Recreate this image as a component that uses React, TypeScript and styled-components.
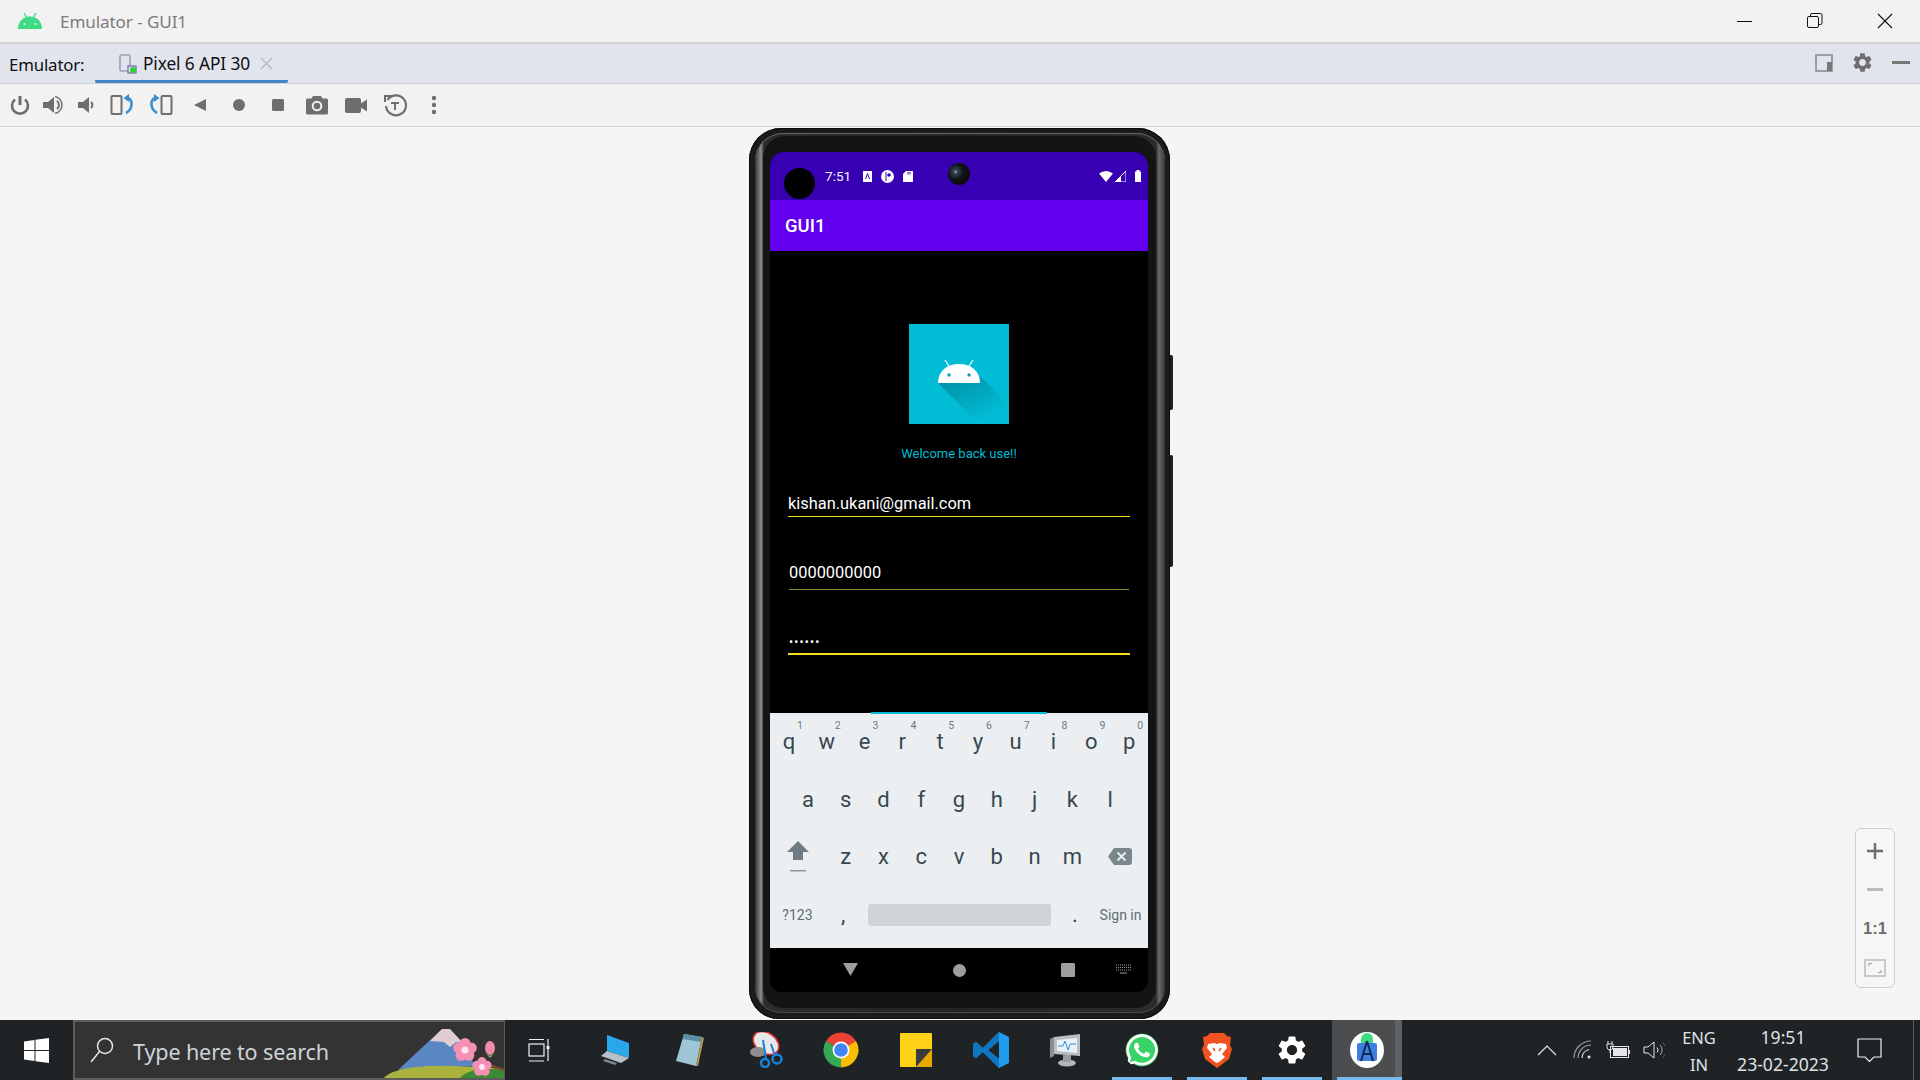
import React from "react";
import styled, { createGlobalStyle } from "styled-components";
import { MdSettings } from "react-icons/md";
import { FaWhatsapp } from "react-icons/fa";

const Global = createGlobalStyle`
  html, body { margin: 0; padding: 0; background: #f5f5f5; overflow: hidden; }
  * { box-sizing: border-box; }
`;

const ui = `"Noto Sans", "Open Sans", sans-serif`;
const droid = `Roboto, "Noto Sans", sans-serif`;

const Root = styled.div`
  width: 1920px; height: 1080px; display: flex; flex-direction: column;
  font-family: ${ui}; overflow: hidden;
`;

/* window chrome */
const TitleBar = styled.header`
  height: 44px; flex: none; display: flex; align-items: center;
  background: #f2f2f2; border-bottom: 2px solid #d1d1d1; padding-left: 18px;
`;
const TitleText = styled.span`
  margin-left: 18px; font-size: 17.1px; color: #7c7c7c; letter-spacing: -0.1px;
`;
const WindowControls = styled.div`
  margin-left: auto; display: flex; height: 100%;
`;
const WindowButton = styled.div`
  width: 70px; display: flex; align-items: center; justify-content: center;
`;

const TabBar = styled.div`
  height: 40px; flex: none; display: flex; align-items: stretch;
  background: #e1e4ec; border-bottom: 1px solid #d1d1d1;
`;
const TabLabel = styled.span`
  margin-left: 9px; width: 86px; font-size: 16.8px; line-height: 41px; color: #101010;
  letter-spacing: -0.15px;
`;
const Tab = styled.div`
  width: 193px; display: flex; align-items: center; padding: 3px 0 0 24px;
  border-bottom: 3px solid #4083c9; border-radius: 0 0 2px 2px;
  font-size: 17.3px; color: #101010; letter-spacing: -0.1px;
`;
const TabText = styled.span`
  margin-left: 6px; white-space: nowrap;
`;
const TabClose = styled.span`
  margin-left: 10px; display: flex;
`;
const TabTools = styled.div`
  margin-left: auto; display: flex; align-items: center; padding: 0 0 2px 0;
`;
const TabTool = styled.div`
  width: 38.5px; display: flex; justify-content: center; align-items: center; color: #6e6e6e;
`;

const Toolbar = styled.div`
  height: 43px; flex: none; display: flex; align-items: center; padding-left: 4px;
  background: #f2f2f2; border-bottom: 1px solid #d1d1d1; color: #6e6e6e;
`;
const ToolSlot = styled.div<{ $w: number }>`
  width: ${p => p.$w}px; flex: none; display: flex; align-items: center; justify-content: center;
`;

/* device area */
const Main = styled.main`
  flex: 1; position: relative; display: flex; justify-content: center; align-items: flex-start;
  background: #f5f5f5; padding-top: 1px;
`;
const PhoneFrame = styled.div`
  position: relative; width: 421px; height: 891px; margin-right: 1px; padding: 5px 5px 6px 6px;
  background: #1b1b1b; border-radius: 32px 32px 30px 30px;
  box-shadow: inset 0 0 0 1px #0c0c0c;
`;
const PhoneRim = styled.div`
  height: 100%; padding: 3px 9px 5px 8px; border-radius: 28px 28px 26px 26px;
  background: linear-gradient(90deg, #333 0, #8c8c8c 6px, #2c2c2c 9px, #242424 50%, #2c2c2c calc(100% - 9px), #6a6a6a calc(100% - 6px), #333 100%);
  box-shadow: inset 0 1px 0 #666, inset 0 -1px 0 #4a4a4a;
`;
const PhoneBezel = styled.div`
  height: 100%; padding: 16px 5px 15px 7px; background: #141414; border-radius: 22px 22px 20px 20px;
`;
const Screen = styled.div`
  position: relative; width: 378px; height: 840px; background: #000; border-radius: 14px 14px 12px 12px;
  overflow: hidden; display: flex; flex-direction: column; font-family: ${droid};
`;
const SideButton = styled.div<{ $top: number; $h: number }>`
  position: absolute; right: -3px; top: ${p => p.$top}px; width: 3px; height: ${p => p.$h}px;
  background: #1e1e1e; border-radius: 0 2px 2px 0;
`;

const StatusBar = styled.div`
  height: 48px; flex: none; background: #3700b3; display: flex; align-items: flex-start;
  padding: 16px 6px 0 14px; color: #fff;
`;
const PunchHole = styled.div`
  width: 31px; height: 31px; border-radius: 50%; background: #000; flex: none;
`;
const StatusGroup = styled.div<{ $right?: boolean }>`
  display: flex; align-items: center; height: 14px; margin-top: 1px;
  margin-left: ${p => (p.$right ? "auto" : "10px")}; gap: ${p => (p.$right ? "2px" : "0")};
`;
const StatusTime = styled.span`
  font-size: 13.6px; width: 38px; color: #f4f0fb;
`;
const StatusIcon = styled.span<{ $w: number }>`
  width: ${p => p.$w}px; display: flex; justify-content: flex-start;
`;
const Camera = styled.div`
  position: absolute; left: 178px; top: 11px; width: 22px; height: 22px; border-radius: 50%;
  background: radial-gradient(circle at 35% 40%, #8fa0ad 0, #33404a 12%, #101419 38%, #0a0a0a 70%, #2a2a2a 100%);
`;
const AppBar = styled.div`
  height: 51px; flex: none; background: #6200ee; color: #fff; display: flex; align-items: center;
  padding-left: 15px; font-size: 18.5px; font-weight: 500;
`;
const Body = styled.div`
  flex: 1; display: flex; flex-direction: column; align-items: flex-start; padding-top: 73px; background: #000;
`;
const Logo = styled.div`
  width: 100px; height: 100px; align-self: center; background: #00bcd4; display: flex;
`;
const Welcome = styled.div`
  align-self: center; margin-top: 23px; font-size: 13px; line-height: 14px; color: #00bcd4;
`;
const Field = styled.div<{ $left: number; $w: number; $top: number; $pad: number; $line: string; $th: number }>`
  margin: ${p => p.$top}px 0 0 ${p => p.$left}px; width: ${p => p.$w}px; padding-bottom: ${p => p.$pad}px;
  border-bottom: ${p => p.$th}px solid ${p => p.$line}; color: #fff; font-size: 16.4px; line-height: 20px;
`;
const Dots = styled.span`
  font-size: 12px; letter-spacing: 1.2px; margin-left: 1px;
`;

const Keyboard = styled.div`
  position: relative; height: 235px; flex: none; background: #eceff1; padding-top: 1px; color: #37474f;
`;
const KeyboardAccent = styled.div`
  position: absolute; left: 101px; top: -1px; width: 176px; height: 2px; background: #00bcd4;
`;
const KeyRow = styled.div<{ $inset?: number }>`
  height: 57.5px; display: flex; align-items: center; padding: 0 ${p => p.$inset ?? 0}px;
`;
const Key = styled.div<{ $span?: number }>`
  position: relative; flex: ${p => p.$span ?? 1} 1 0; height: 100%; display: flex;
  align-items: center; justify-content: center; font-size: 22px; padding-bottom: 2px;
`;
const KeyHint = styled.span`
  position: absolute; top: 5px; left: 27px; font-size: 10.5px; color: #6c7a81; line-height: 13px;
`;
const ActionKey = styled(Key)`
  font-size: 14px; color: #5f6e75; padding-bottom: 0;
`;
const SpaceBar = styled.div`
  flex: 5 1 0; height: 22px; margin: 0 6px; border-radius: 3px; background: #cfd4d7;
`;
const NavBar = styled.div`
  height: 44px; flex: none; background: #000; display: flex; align-items: center; padding: 0 0 2px 60px;
`;
const NavSlot = styled.div<{ $after: number }>`
  width: 40px; display: flex; justify-content: center; margin-right: ${p => p.$after}px;
`;
const NavCircle = styled.div`
  width: 13px; height: 13px; border-radius: 50%; background: #9e9e9e; margin-top: 2px;
`;
const NavSquare = styled.div`
  width: 14px; height: 14px; border-radius: 1px; background: #9e9e9e; margin-top: 1px;
`;

const ZoomPanel = styled.div`
  position: absolute; right: 25px; bottom: 32px; width: 40px; height: 160px; border: 1.5px solid #cfcfcf;
  border-radius: 6px; background: #f6f6f6; display: flex; flex-direction: column; padding-top: 3px;
`;
const ZoomItem = styled.div`
  height: 39px; display: flex; align-items: center; justify-content: center; color: #6e6e6e;
  font: 700 16.5px "Liberation Sans", sans-serif;
`;

/* taskbar */
const Taskbar = styled.footer`
  height: 60px; flex: none; display: flex; align-items: stretch; background: #1f2326; color: #e4e6e8;
`;
const StartButton = styled.div`
  width: 73px; display: flex; align-items: center; justify-content: center;
`;
const SearchBox = styled.div`
  position: relative; width: 432px; background: #333; border: 2px solid #5c5c5c; border-right-width: 1px;
  display: flex; align-items: center; padding-left: 14px; overflow: hidden;
`;
const SearchText = styled.span`
  margin-left: 18px; font-size: 21.6px; color: #cdd3d8; letter-spacing: -0.15px; padding-top: 3px;
`;
const SearchArt = styled.div`
  position: absolute; right: 0; bottom: 0; width: 120px; height: 52px; display: flex;
`;
const Rail = styled.div`
  display: flex; gap: 5.2px;
`;
const Slot = styled.div<{ $open?: boolean; $active?: boolean }>`
  position: relative; width: 70px; display: flex; align-items: center; justify-content: center;
  background: ${p => (p.$active ? "linear-gradient(90deg,#4b4d4f 0,#4b4d4f 90%,#5f6163 90%)" : "transparent")};
  &::after {
    content: "";
    display: ${p => (p.$open ? "block" : "none")};
    position: absolute; bottom: 0; height: 3px; background: #76b9ed;
    left: 5px; right: ${p => (p.$active ? "0" : "5px")};
  }
`;
const Tray = styled.div`
  margin-left: auto; display: flex; align-items: stretch; padding-right: 6px;
`;
const TraySlot = styled.div<{ $w: number }>`
  width: ${p => p.$w}px; display: flex; align-items: center; justify-content: center;
`;
const TrayText = styled.div<{ $w: number; $size: number }>`
  width: ${p => p.$w}px; display: flex; flex-direction: column; align-items: center; justify-content: center;
  font-size: ${p => p.$size}px; line-height: 27px; color: #dfe1e3; padding-top: 1px; white-space: nowrap;
`;
const DesktopEdge = styled.div`
  width: 15px; border-right: 1px solid #5a5a5a;
`;
const WhatsappMark = styled(FaWhatsapp)`
  width: 36px; height: 36px; color: #fff; border-radius: 50%;
  background: radial-gradient(circle, #37d366 0 62%, transparent 66%);
`;

/* drawings */
const AndroidHead = () => (
  <svg width="24" height="18" viewBox="0 0 24 18">
    <path d="M6 1l3 5M18 1l-3 5" stroke="#3ddc84" strokeWidth="1.4" />
    <path d="M0 17C0 9.500 5 4.500 12 4.500S24 9.500 24 17Z" fill="#3ddc84" />
    <circle cx="6.500" cy="12" r="1" fill="#f2f2f2" /><circle cx="17.500" cy="12" r="1" fill="#f2f2f2" />
  </svg>
);
const Tool = ({ children, w = 24 }: { children: React.ReactNode; w?: number }) => (
  <svg width={w} height="24" viewBox={`0 0 ${w} 24`} fill="none">{children}</svg>
);
const grey = "#6e6e6e";
const blue = "#3a8ed0";

const LogoArt = () => (
  <svg width="100" height="100" viewBox="0 0 100 100">
    <defs>
      <linearGradient id="sh" x1="0.1" y1="0" x2="0.75" y2="0.8">
        <stop offset="0" stopColor="#008ea2" /><stop offset="1" stopColor="#00bcd4" />
      </linearGradient>
    </defs>
    <polygon points="29,59 71,59 71,52 100,81 100,100 70,100" fill="url(#sh)" />
    <path d="M36 36l4 6M64 36l-4 6" stroke="#fff" strokeWidth="1.2" />
    <path d="M29 59C29 47 38 40 50 40S71 47 71 59Z" fill="#fff" />
    <circle cx="40" cy="51" r="1.700" fill="#00a4b8" /><circle cx="60" cy="51" r="1.700" fill="#00a4b8" />
  </svg>
);

const Chrome = () => (
  <svg width="36" height="36" viewBox="0 0 36 36">
    <path d="M18 18L3 9A17.500 17.500 0 0 1 33 9Z" fill="#ea4335" />
    <path d="M18 18L33 9A17.500 17.500 0 0 1 18 35.500Z" fill="#fbbc04" />
    <path d="M18 18L18 35.500A17.500 17.500 0 0 1 3 9Z" fill="#34a853" />
    <circle cx="18" cy="18" r="8.500" fill="#fff" /><circle cx="18" cy="18" r="6.800" fill="#4285f4" />
  </svg>
);

const Blossom = ({ x, y, r }: { x: number; y: number; r: number }) => (
  <g>
    {[0, 72, 144, 216, 288].map(a => (
      <circle
        key={a}
        cx={x + Math.cos((a * Math.PI) / 180 - Math.PI / 2) * r * 0.6}
        cy={y + Math.sin((a * Math.PI) / 180 - Math.PI / 2) * r * 0.6}
        r={r * 0.5}
        fill="#f58fb4"
      />
    ))}
    <circle cx={x} cy={y} r={r * 0.32} fill="#fde6ef" />
  </g>
);

export default function App() {
  const top = "qwertyuiop".split("");
  const mid = "asdfghjkl".split("");
  const low = "zxcvbnm".split("");
  return (
    <Root>
      <Global />
      <TitleBar>
        <AndroidHead />
        <TitleText>Emulator - GUI1</TitleText>
        <WindowControls>
          <WindowButton><svg width="16" height="16"><path d="M0 8.500h15" stroke="#111" /></svg></WindowButton>
          <WindowButton><svg width="16" height="16" fill="none" stroke="#111"><rect x="0.500" y="3.500" width="11" height="11" rx="1.500" /><path d="M3.500 3.500V2a1.500 1.500 0 0 1 1.500-1.500h8.500A1.500 1.500 0 0 1 15 2v8a1.500 1.500 0 0 1-1.500 1.500h-2" /></svg></WindowButton>
          <WindowButton><svg width="16" height="16"><path d="M1 1l14 14M15 1L1 15" stroke="#111" strokeWidth="1.100" /></svg></WindowButton>
        </WindowControls>
      </TitleBar>

      <TabBar>
        <TabLabel>Emulator:</TabLabel>
        <Tab>
          <svg width="18" height="20" viewBox="0 0 18 20" fill="none">
            <rect x="1" y="1" width="10" height="16" rx="1.500" stroke="#9aa4ae" strokeWidth="1.600" />
            <rect x="9" y="12" width="8" height="7" fill="#e1e4ec" stroke="#7a5fb5" strokeWidth="1.200" />
            <circle cx="14" cy="16" r="3" fill="#27d827" />
          </svg>
          <TabText>Pixel 6 API 30</TabText>
          <TabClose><svg width="13" height="13"><path d="M1 1l11 11M12 1L1 12" stroke="#b4b8c0" strokeWidth="1.300" /></svg></TabClose>
        </Tab>
        <TabTools>
          <TabTool>
            <svg width="18" height="18" viewBox="0 0 18 18"><rect x="1" y="1" width="16" height="16" fill="none" stroke="#777" strokeWidth="1.300" /><rect x="12" y="8" width="5" height="9" fill="#777" /></svg>
          </TabTool>
          <TabTool><MdSettings size={23} /></TabTool>
          <TabTool><svg width="18" height="4"><rect width="18" height="3" fill="#777" /></svg></TabTool>
        </TabTools>
      </TabBar>

      <Toolbar>
        <ToolSlot $w={32}><Tool><path d="M12 3v9" stroke={grey} strokeWidth="3" /><path d="M7 6.500a8 8 0 1 0 10 0" stroke={grey} strokeWidth="2.600" /></Tool></ToolSlot>
        <ToolSlot $w={34}><Tool><path d="M2 9h5l6-5v16l-6-5H2Z" fill={grey} /><path d="M16 8a5 5 0 0 1 0 8" stroke={grey} strokeWidth="2" /><path d="M14 3.500a9 9 0 0 1 7 8.500a9 9 0 0 1-7 8.500" stroke={grey} strokeWidth="1.500" /></Tool></ToolSlot>
        <ToolSlot $w={32}><Tool><path d="M4 9h5l6-5v16l-6-5H4Z" fill={grey} /><path d="M17 9a4 4 0 0 1 0 6" stroke={grey} strokeWidth="2" /></Tool></ToolSlot>
        <ToolSlot $w={40}><Tool w={24}><rect x="1.500" y="3" width="10" height="18" rx="1" stroke={grey} strokeWidth="2" /><path d="M18 5C23 7 23 16 16 20" stroke={blue} strokeWidth="2.600" /><path d="M13.500 5L19 1v8Z" fill={blue} /></Tool></ToolSlot>
        <ToolSlot $w={38}><Tool w={24}><rect x="12.500" y="3" width="10" height="18" rx="1" stroke={grey} strokeWidth="2" /><path d="M6 5C1 7 1 16 8 20" stroke={blue} strokeWidth="2.600" /><path d="M10.500 5L5 1v8Z" fill={blue} /></Tool></ToolSlot>
        <ToolSlot $w={39}><Tool><path d="M6 12l12-6v12Z" fill={grey} /></Tool></ToolSlot>
        <ToolSlot $w={39}><Tool><circle cx="12" cy="12" r="6" fill={grey} /></Tool></ToolSlot>
        <ToolSlot $w={39}><Tool><rect x="6" y="6" width="12" height="12" rx="1.500" fill={grey} /></Tool></ToolSlot>
        <ToolSlot $w={39}><Tool><path d="M1 7a1.500 1.500 0 0 1 1.500-1.500h4L8 3h8l1.500 2.500h4A1.500 1.500 0 0 1 23 7v13a1.500 1.500 0 0 1-1.500 1.500h-19A1.500 1.500 0 0 1 1 20Z" fill={grey} /><circle cx="12" cy="13" r="4.300" fill="none" stroke="#f2f2f2" strokeWidth="2" /></Tool></ToolSlot>
        <ToolSlot $w={39}><Tool><rect x="1" y="5" width="16" height="15" rx="2" fill={grey} /><path d="M16 11l7-4.500v12L16 14Z" fill={grey} /></Tool></ToolSlot>
        <ToolSlot $w={39}><Tool><path d="M4.500 7A10 10 0 1 1 3 13" stroke={grey} strokeWidth="2.200" /><path d="M1 2h7v2H3v5H1Z" fill={grey} /><path d="M8 10h8M12 10v7" stroke={grey} strokeWidth="2" /></Tool></ToolSlot>
        <ToolSlot $w={39}><Tool><circle cx="12" cy="5" r="2.200" fill={grey} /><circle cx="12" cy="12" r="2.200" fill={grey} /><circle cx="12" cy="19" r="2.200" fill={grey} /></Tool></ToolSlot>
      </Toolbar>

      <Main>
        <PhoneFrame>
          <SideButton $top={227} $h={55} />
          <SideButton $top={327} $h={112} />
          <PhoneRim>
            <PhoneBezel>
              <Screen>
                <StatusBar>
                  <PunchHole />
                  <StatusGroup>
                    <StatusTime>7:51</StatusTime>
                    <StatusIcon $w={18}>
                      <svg width="9" height="11" viewBox="0 0 9 11"><path d="M0 0h9v11H0Z" fill="#fff" /><path d="M2.500 8L4.500 2.500 6.500 8" stroke="#3700b3" fill="none" /></svg>
                    </StatusIcon>
                    <StatusIcon $w={22}>
                      <svg width="13" height="13" viewBox="0 0 13 13"><circle cx="6.500" cy="6.500" r="6.500" fill="#fff" /><path d="M5 2v9" stroke="#3700b3" /><circle cx="8" cy="5" r="1.800" fill="#3700b3" /></svg>
                    </StatusIcon>
                    <StatusIcon $w={10}>
                      <svg width="10" height="11" viewBox="0 0 10 11"><path d="M3 0h7v11H0V3Z" fill="#fff" /><path d="M5 1v2.500M7 1v2.500" stroke="#3700b3" /></svg>
                    </StatusIcon>
                  </StatusGroup>
                  <Camera />
                  <StatusGroup $right>
                    <svg width="14" height="11" viewBox="0 0 14 11"><path d="M0 2.500Q7-2.500 14 2.500L7 11Z" fill="#fff" /></svg>
                    <svg width="11" height="11" viewBox="0 0 11 11"><path d="M11 0V11H0Z" fill="none" stroke="#fff" /><path d="M6 5.500V11H0Z M6 5V11H1L6 5" fill="#fff" /></svg>
                    <svg width="14" height="12" viewBox="0 0 14 12"><path d="M8.500 1.500V0h3v1.500H13V12H7V1.500Z" fill="#fff" /></svg>
                  </StatusGroup>
                </StatusBar>
                <AppBar>GUI1</AppBar>
                <Body>
                  <Logo><LogoArt /></Logo>
                  <Welcome>Welcome back use!!</Welcome>
                  <Field $left={18} $w={342} $top={33} $pad={2} $line="#f0dc14" $th={1}>kishan.ukani@gmail.com</Field>
                  <Field $left={19} $w={340} $top={46} $pad={6} $line="#8f8526" $th={1}>0000000000</Field>
                  <Field $left={18} $w={342} $top={41} $pad={1} $line="#f4dc1e" $th={2}><Dots>••••••</Dots></Field>
                </Body>
                <Keyboard>
                  <KeyboardAccent />
                  <KeyRow>
                    {top.map((k, i) => (
                      <Key key={k}>{k}<KeyHint>{(i + 1) % 10}</KeyHint></Key>
                    ))}
                  </KeyRow>
                  <KeyRow $inset={19}>
                    {mid.map(k => <Key key={k}>{k}</Key>)}
                  </KeyRow>
                  <KeyRow>
                    <Key $span={1.5}>
                      <svg width="24" height="34" viewBox="0 0 24 34"><path d="M12 1L23 12h-6v8H7v-8H1Z" fill="#6f7c83" /><rect x="4" y="30" width="16" height="1.500" fill="#8a959b" /></svg>
                    </Key>
                    {low.map(k => <Key key={k}>{k}</Key>)}
                    <Key $span={1.5}>
                      <svg width="24" height="17" viewBox="0 0 24 17"><path d="M6 0h15a3 3 0 0 1 3 3v11a3 3 0 0 1-3 3H6L0 8.500Z" fill="#7b878d" /><path d="M9.500 4.500l8 8M17.500 4.500l-8 8" stroke="#eceff1" strokeWidth="1.800" /></svg>
                    </Key>
                  </KeyRow>
                  <KeyRow>
                    <ActionKey $span={1.5}>?123</ActionKey>
                    <Key>,</Key>
                    <SpaceBar />
                    <Key>.</Key>
                    <ActionKey $span={1.5}>Sign in</ActionKey>
                  </KeyRow>
                </Keyboard>
                <NavBar>
                  <NavSlot $after={69}><svg width="15" height="13"><path d="M0 0h15L7.500 13Z" fill="#9e9e9e" /></svg></NavSlot>
                  <NavSlot $after={69}><NavCircle /></NavSlot>
                  <NavSlot $after={15}><NavSquare /></NavSlot>
                  <NavSlot $after={0}>
                    <svg width="15" height="10" viewBox="0 0 15 10"><path d="M0 1h15M0 3.500h15M0 6h15" stroke="#9e9e9e" strokeDasharray="1 1" /><path d="M4 9h7" stroke="#9e9e9e" /></svg>
                  </NavSlot>
                </NavBar>
              </Screen>
            </PhoneBezel>
          </PhoneRim>
        </PhoneFrame>
        <ZoomPanel>
          <ZoomItem><svg width="16" height="16"><path d="M8 0v16M0 8h16" stroke="#6e6e6e" strokeWidth="2.500" /></svg></ZoomItem>
          <ZoomItem><svg width="16" height="4"><rect width="16" height="3" fill="#bdbdbd" /></svg></ZoomItem>
          <ZoomItem>1:1</ZoomItem>
          <ZoomItem><svg width="22" height="18" viewBox="0 0 22 18" fill="none"><rect x="1" y="1" width="20" height="16" stroke="#c4c4c4" strokeWidth="1.800" /><path d="M5 7V4.500h3M17 11v2.500h-3" stroke="#9a9a9a" /></svg></ZoomItem>
        </ZoomPanel>
      </Main>

      <Taskbar>
        <StartButton>
          <svg width="25" height="25" viewBox="0 0 25 25"><path d="M0 3.500l10.500-1.500v10H0ZM11.500 1.800L25 0v12H11.500ZM0 13h10.500v10L0 21.500ZM11.500 13H25v12l-13.500-1.800Z" fill="#fff" /></svg>
        </StartButton>
        <SearchBox>
          <svg width="26" height="28" viewBox="0 0 26 28" fill="none"><circle cx="16" cy="10" r="7.500" stroke="#e4e6e8" strokeWidth="1.500" /><path d="M10.500 15.500L2 26" stroke="#e4e6e8" strokeWidth="1.500" /></svg>
          <SearchText>Type here to search</SearchText>
          <SearchArt>
            <svg width="120" height="52" viewBox="0 0 120 52">
              <path d="M14 44L58 3h8L92 40Z" fill="#5b86c4" />
              <path d="M46 15L58 3h8l14 15-8-2-6 5-6-5Z" fill="#e0cdd3" />
              <path d="M0 52C8 42 40 39 70 40S112 42 120 44V52Z" fill="#a8b23c" />
              <path d="M76 52C84 42 105 42 120 44V52Z" fill="#3c8a33" />
              <path d="M96 36L120 44" stroke="#7a4b2a" strokeWidth="2.500" />
              <Blossom x={81} y={24} r={11} />
              <Blossom x={98} y={41} r={9} />
              <ellipse cx="106" cy="22" rx="5" ry="7" fill="#ee8ca8" /><path d="M101 27q5 5 10 0l-5 5Z" fill="#6fb34a" />
            </svg>
          </SearchArt>
        </SearchBox>
        <Rail>
          <Slot>
            <svg width="24" height="24" viewBox="0 0 24 24" fill="none" stroke="#f2f2f2" strokeWidth="1.200"><path d="M1 1.500h15M1 23h15M20 1v22" /><rect x="1" y="6" width="15" height="12" /><rect x="18.500" y="8" width="3" height="3" fill="#f2f2f2" stroke="none" /></svg>
          </Slot>
          <Slot>
            <svg width="32" height="32" viewBox="0 0 32 32"><path d="M8 1l22 8v15L8 17Z" fill="#2aa6ea" /><path d="M2 22l20 7 8-5-22-7Z" fill="#b8c0c8" /><path d="M6 25l12 4-2 2-12-4Z" fill="#7a858f" /></svg>
          </Slot>
          <Slot>
            <svg width="32" height="34" viewBox="0 0 32 34"><path d="M10 1l18 3-6 29-20-5Z" fill="#9fc6d6" /><path d="M10 1l18 3-1.500 5L8.500 6Z" fill="#5a8fa6" /><path d="M22 33l6-29 2 1-6 28Z" fill="#b8964a" /></svg>
          </Slot>
          <Slot>
            <svg width="34" height="36" viewBox="0 0 34 36" fill="none"><ellipse cx="17" cy="11" rx="14" ry="10" transform="rotate(35 17 11)" fill="#e8e8e8" stroke="#d9343a" strokeWidth="1.500" /><ellipse cx="9" cy="20" rx="8" ry="5" fill="#8d8d8d" /><circle cx="16" cy="31" r="4" stroke="#1683d8" strokeWidth="2.500" /><circle cx="28" cy="27" r="4.500" stroke="#1683d8" strokeWidth="2.500" /><path d="M14 8l3 19M22 12l4 12" stroke="#1683d8" strokeWidth="2" /></svg>
          </Slot>
          <Slot><Chrome /></Slot>
          <Slot>
            <svg width="32" height="34" viewBox="0 0 32 34"><rect width="32" height="34" rx="1" fill="#fcd116" /><path d="M16 34L32 16V33a1 1 0 0 1-1 1Z" fill="#e5a900" /><path d="M16 34V16H32Z" fill="#3b3b3b" /></svg>
          </Slot>
          <Slot>
            <svg width="36" height="36" viewBox="0 0 36 36"><path d="M26 0l10 5v26l-10 5L10 20 3 26l-3-2v-12l3-2 7 6Z" fill="#1f9cf0" /><path d="M26 9L15 18l11 9Z" fill="#1f2326" /><path d="M10 16L3 10l-3 2v12l3 2 7-6 16 16V27L15 18l11-9V0Z" fill="#0e75c0" /></svg>
          </Slot>
          <Slot>
            <svg width="36" height="36" viewBox="0 0 36 36"><path d="M6 5l26-3v22L6 22Z" fill="#b9bec2" /><path d="M9 8l20-2v15L9 19Z" fill="#e8f1f7" /><path d="M10 14l5 0 2-5 3 9 2-6 6 0" fill="none" stroke="#3a8ed0" /><path d="M2 7l4-2v19l-4 2Z" fill="#8a8f93" /><ellipse cx="19" cy="31" rx="9" ry="3.500" fill="#b3b7ba" /><rect x="15" y="23" width="8" height="7" fill="#9a9ea1" /></svg>
          </Slot>
          <Slot $open><WhatsappMark /></Slot>
          <Slot $open>
            <svg width="30" height="35" viewBox="0 0 30 35"><path d="M8 0h14l3 3 4 1-1 8 2 4-3 10-12 9-12-9L0 16l2-4-1-8 4-1Z" fill="#f1521f" /><path d="M6 11l6-1 3 1 3-1 6 1 1 4-5 6 3 3-6 5-2 1-2-1-6-5 3-3-5-6Z" fill="#fff" /><path d="M11 15l2 3M19 15l-2 3" stroke="#f1521f" strokeWidth="1.500" /></svg>
          </Slot>
          <Slot $open><MdSettings size={34} color="#fff" /></Slot>
          <Slot $open $active>
            <svg width="34" height="36" viewBox="0 0 34 36"><ellipse cx="17" cy="18" rx="17" ry="18" fill="#fff" /><rect x="7" y="11" width="20" height="18" rx="2" fill="#3f7fe0" /><path d="M11 7a6 6 0 0 1 12 0v4H11Z" fill="#3ddc84" /><path d="M17 9l-6 20M17 9l6 20M13 22h8" stroke="#10285a" strokeWidth="2" fill="none" /></svg>
          </Slot>
        </Rail>
        <Tray>
          <TraySlot $w={36}><svg width="20" height="12"><path d="M1 11l9-9 9 9" fill="none" stroke="#e4e6e8" strokeWidth="1.200" /></svg></TraySlot>
          <TraySlot $w={35}><svg width="20" height="20" viewBox="0 0 20 20" fill="none" stroke="#9a9da0" strokeWidth="1.200"><path d="M1 18A17 17 0 0 1 18 1" /><path d="M5 18A13 13 0 0 1 18 5" /><path d="M9 18a9 9 0 0 1 7-8.500" stroke="#e4e6e8" /><circle cx="16" cy="17" r="1.500" fill="#e4e6e8" stroke="none" /></svg></TraySlot>
          <TraySlot $w={36}><svg width="24" height="18" viewBox="0 0 24 18" fill="none"><path d="M2 0v3M6 0v3M1 3h6v3a3 3 0 0 1-6 0ZM4 9v3" stroke="#e4e6e8" /><rect x="4.500" y="5.500" width="18" height="11" stroke="#e4e6e8" /><rect x="7" y="7" width="14" height="8" fill="#e4e6e8" /><rect x="23" y="9" width="1" height="4" fill="#e4e6e8" /></svg></TraySlot>
          <TraySlot $w={35}><svg width="22" height="18" viewBox="0 0 22 18" fill="none"><path d="M1 6h4l6-5v16l-6-5H1Z" stroke="#e4e6e8" /><path d="M14 6.500a3.500 3.500 0 0 1 0 5" stroke="#e4e6e8" /><path d="M17 4a7 7 0 0 1 0 10" stroke="#a6a8aa" /><path d="M20 1.500a11 11 0 0 1 0 15" stroke="#5f6163" /></svg></TraySlot>
          <TrayText $w={56} $size={16.5}><span>ENG</span><span>IN</span></TrayText>
          <TrayText $w={112} $size={17.6}><span>19:51</span><span>23-02-2023</span></TrayText>
          <TraySlot $w={60}><svg width="25" height="25" viewBox="0 0 25 25" fill="none"><path d="M1 1h23v18h-7l-4.500 4.500L8 19H1Z" stroke="#f0f0f0" strokeWidth="1.200" /></svg></TraySlot>
          <DesktopEdge />
        </Tray>
      </Taskbar>
    </Root>
  );
}
